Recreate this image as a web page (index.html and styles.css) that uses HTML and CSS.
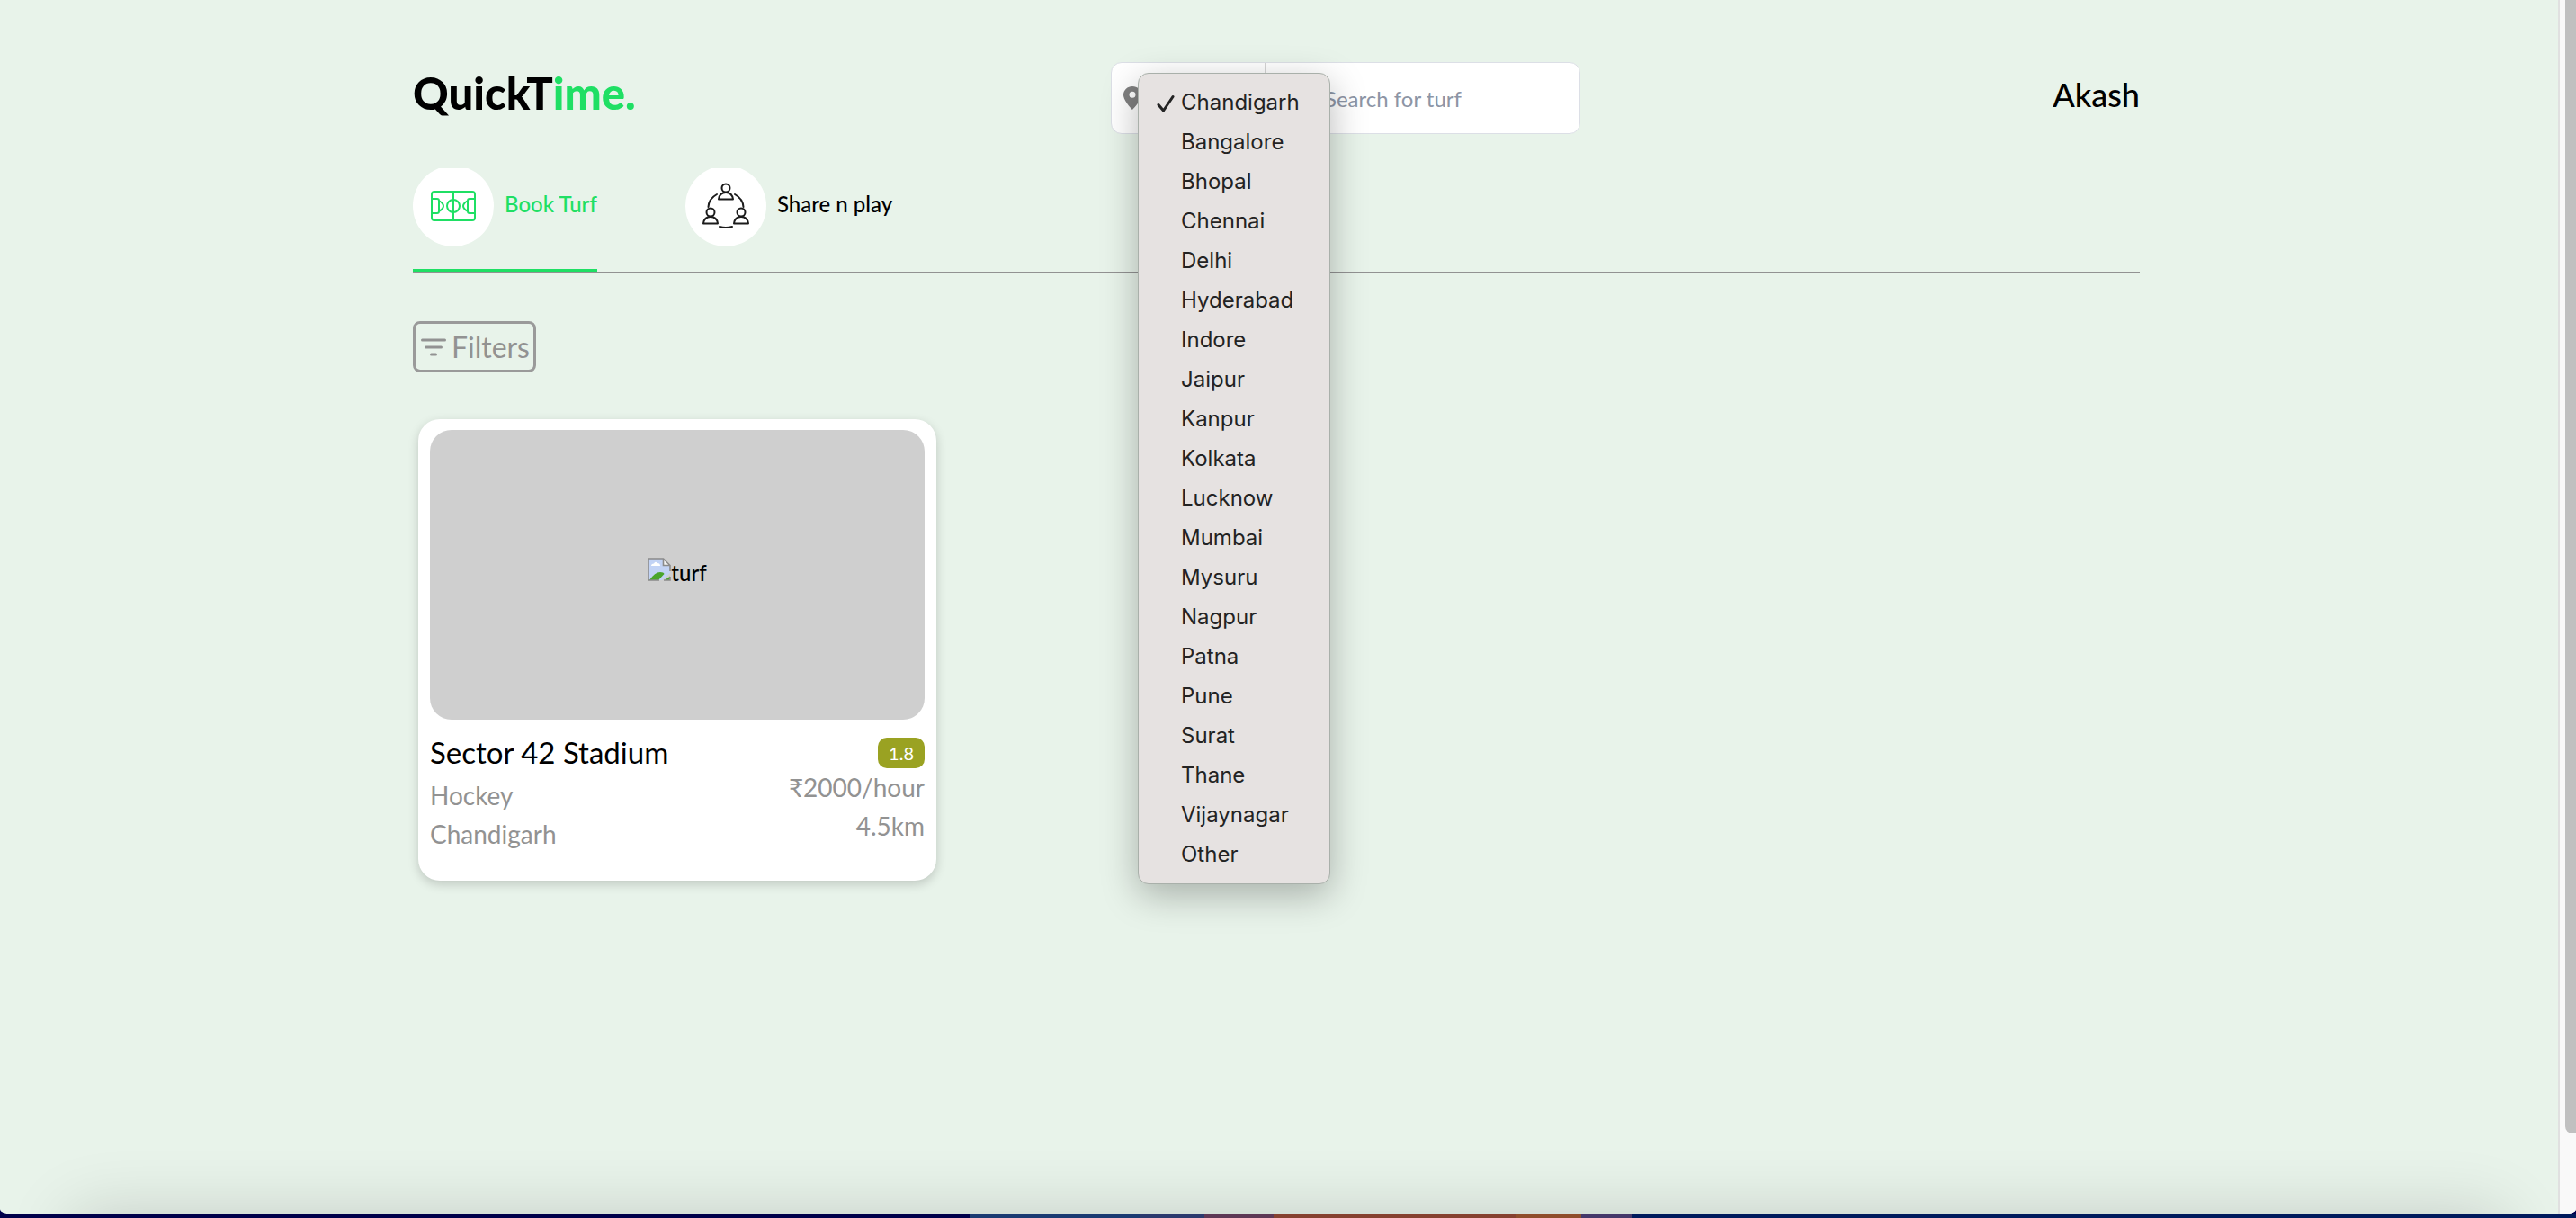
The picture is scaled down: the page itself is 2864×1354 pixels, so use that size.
FILE: index.html
```html
<!DOCTYPE html>
<html lang="en">
<head>
<meta charset="utf-8">
<meta name="viewport" content="width=device-width, initial-scale=1">
<title>QuickTime.</title>
<link rel="stylesheet" href="styles.css">
</head>
<body>
<div class="window">
  <div class="page">
    <header class="header">
      <a class="logo" href="#">QuickT<span class="logo-accent">ime.</span></a>
      <form class="search">
        <div class="city">
          <svg class="pin" viewBox="0 0 20 26" aria-hidden="true"><path fill-rule="evenodd" d="M10 0C4.500 0 0 4.200 0 9.500 0 16 10 26 10 26s10-10 10-16.500C20 4.200 15.500 0 10 0zm0 5.700a3.500 3.500 0 1 1 0 7 3.500 3.500 0 0 1 0-7z"/></svg>
          <select class="city-select" aria-label="City"><option>Chandigarh</option></select>
        </div>
        <input class="search-input" type="text" placeholder="Search for turf" aria-label="Search for turf">
        <ul class="menu" role="listbox" aria-label="City">
          <li class="option" role="option" aria-selected="true"><svg class="check" viewBox="0 0 20 20" aria-hidden="true"><path d="M2 11.500 7.500 18 18 2.500"/></svg>Chandigarh</li>
          <li class="option" role="option">Bangalore</li>
          <li class="option" role="option">Bhopal</li>
          <li class="option" role="option">Chennai</li>
          <li class="option" role="option">Delhi</li>
          <li class="option" role="option">Hyderabad</li>
          <li class="option" role="option">Indore</li>
          <li class="option" role="option">Jaipur</li>
          <li class="option" role="option">Kanpur</li>
          <li class="option" role="option">Kolkata</li>
          <li class="option" role="option">Lucknow</li>
          <li class="option" role="option">Mumbai</li>
          <li class="option" role="option">Mysuru</li>
          <li class="option" role="option">Nagpur</li>
          <li class="option" role="option">Patna</li>
          <li class="option" role="option">Pune</li>
          <li class="option" role="option">Surat</li>
          <li class="option" role="option">Thane</li>
          <li class="option" role="option">Vijaynagar</li>
          <li class="option" role="option">Other</li>
        </ul>
      </form>
      <a class="user" href="#">Akash</a>
    </header>

    <nav class="tabs">
      <a class="tab tab-active" href="#">
        <svg class="tab-icon" viewBox="0 3 90 87" aria-hidden="true">
          <circle cx="45" cy="45" r="45" fill="#fff"/>
          <g fill="none" stroke="#1fdf64" stroke-width="2">
            <rect x="21" y="29" width="48" height="32" rx="3"/>
            <path d="M45 29v32M21 37h6q2 0 2 2v12q0 2-2 2h-6M69 37h-6q-2 0-2 2v12q0 2 2 2h6M29 39q10 6 0 12M61 39q-10 6 0 12"/>
            <circle cx="45" cy="45" r="7"/>
          </g>
        </svg>
        <span class="tab-label">Book Turf</span>
      </a>
      <a class="tab" href="#">
        <svg class="tab-icon" viewBox="0 3 90 87" aria-hidden="true">
          <circle cx="45" cy="45" r="45" fill="#fff"/>
          <g fill="none" stroke="#1b1b1b" stroke-width="2" stroke-linejoin="round">
            <g><circle cx="45" cy="25" r="4.500"/><path d="M37 37.500q1-7.500 8-7.500t8 7.500z"/></g>
            <g><circle cx="28" cy="52" r="4.500"/><path d="M20 64.500q1-7.500 8-7.500t8 7.500z"/></g>
            <g><circle cx="62" cy="52" r="4.500"/><path d="M54 64.500q1-7.500 8-7.500t8 7.500z"/></g>
            <path stroke-linecap="round" d="M35 32q-9 5-9.500 14M55 32q9 5 9.500 14M38 68q7 2 14 0"/>
          </g>
        </svg>
        <span class="tab-label">Share n play</span>
      </a>
    </nav>

    <main>
      <button class="filters" type="button">
        <svg class="filters-icon" viewBox="0 0 28 22" aria-hidden="true"><path d="M1.500 3h25M5.500 11h17M11.500 19h5"/></svg>
        <span>Filters</span>
      </button>

      <article class="card">
        <div class="photo">
          <svg class="broken" viewBox="0 0 26 26" aria-hidden="true">
            <path d="M1 1h16.500l7.500 7.500v8.500L16 25H1z" fill="#c2d3f5"/>
            <path d="M4 9q0-2.500 3-2.500 1.500-3 4-.500 3 0 3 3z" fill="#fff"/>
            <path d="M2 25q6-9 12-9 4 0 4.500 2L12 25zM19 25l6-4.500V25z" fill="#4aa52c"/>
            <path d="M17.500 1v7.500H25z" fill="#f4f4f4"/>
            <path d="M13 25H1V1h16.500L25 8.500V15M17.500 1v7.500H25M18 25h7v-4" fill="none" stroke="#8b8b8b" stroke-width="1.600"/>
          </svg>
          <span>turf</span>
        </div>
        <div class="details">
          <div class="details-main">
            <h2 class="name">Sector 42 Stadium</h2>
            <p class="meta">Hockey</p>
            <p class="meta">Chandigarh</p>
          </div>
          <div class="details-side">
            <span class="rating">1.8</span>
            <p class="meta">₹2000/hour</p>
            <p class="meta">4.5km</p>
          </div>
        </div>
      </article>
    </main>
  </div>
  <div class="scrollbar"><div class="thumb"></div></div>
</div>
<div class="desktop"></div>
</body>
</html>
```
FILE: styles.css
```css
* { box-sizing: border-box; }

body {
  margin: 0;
  min-height: 100vh;
  display: flex;
  flex-direction: column;
  background: #00004e;
  color: #000;
  font-family: Lato, "Noto Sans", sans-serif;
  font-size: 24px;
}

a { color: inherit; text-decoration: none; }
h2, p, ul { margin: 0; padding: 0; }

.window {
  position: relative;
  flex: 1;
  display: flex;
  overflow: hidden;
  background: #e8f3ea;
  border-radius: 0 0 15px 15px / 0 0 6px 6px;
}

/* soft shade cast by the dock onto the window's lower edge */
.window::after {
  content: "";
  position: absolute;
  left: 80px;
  right: 80px;
  bottom: -160px;
  height: 160px;
  box-shadow: 0 0 76px rgba(0, 0, 0, 0.16);
  pointer-events: none;
}

.page {
  flex: 1;
  max-width: 1932px;
  margin: 0 auto;
  padding: 69px 9px 48px 3px;
}

.header {
  display: grid;
  grid-template-columns: 1fr 522px 1fr;
  align-items: start;
}

.logo {
  font-size: 49px;
  line-height: 68px;
  font-weight: 900;
}
.logo-accent { color: #1fdf64; }

.user {
  justify-self: end;
  font-size: 36px;
  line-height: 72px;
  font-weight: 500;
}

.search {
  position: relative;
  left: 77px;
  display: flex;
  height: 80px;
  background: #fff;
  border: 1px solid #dcdfe6;
  border-radius: 12px;
}

.city {
  width: 171px;
  display: flex;
  align-items: center;
  gap: 8px;
  padding-left: 13px;
  border-right: 1px solid #d5d5d5;
}
.pin { width: 20px; height: 26px; fill: #808080; }
.city-select {
  width: 120px;
  border: 0;
  background: transparent;
  font: inherit;
  font-size: 20px;
}
.search-input {
  flex: 1;
  min-width: 0;
  padding: 0 20px 0 66px;
  border: 0;
  background: transparent;
  font: inherit;
  outline: none;
}
.search-input::placeholder { color: #8d95a5; opacity: 1; }

.menu {
  position: absolute;
  left: 29px;
  top: 11px;
  z-index: 2;
  width: 214px;
  padding: 10px 0;
  list-style: none;
  color: #232323;
  background: #e6e2e1;
  border: 1px solid #a9b0aa;
  border-radius: 12px;
  box-shadow: 0 12px 40px rgba(0, 0, 0, 0.28);
  font-family: Inter, "Liberation Sans", sans-serif;
  font-size: 24px;
}
.option {
  position: relative;
  padding-left: 47px;
  line-height: 44px;
}
.check {
  position: absolute;
  left: 20px;
  top: 13px;
  width: 20px;
  height: 20px;
  fill: none;
  stroke: #232323;
  stroke-width: 3;
  stroke-linecap: round;
  stroke-linejoin: round;
}

.tabs {
  display: flex;
  gap: 98px;
  margin-top: 38px;
  border-bottom: 1px solid #929292;
}
.tab {
  display: flex;
  align-items: flex-start;
  gap: 12px;
  height: 115px;
  border-bottom: 3px solid transparent;
  font-weight: 500;
}
.tab-active { color: #1fdf64; border-color: #1fdf64; }
.tab-icon { width: 90px; height: 87px; }
.tab-label { line-height: 80px; }

.filters {
  display: flex;
  align-items: center;
  gap: 6px;
  height: 57px;
  margin-top: 54px;
  padding: 0 4px 0 6px;
  color: #929292;
  background: transparent;
  border: 3px solid #9a9a9a;
  border-radius: 8px;
  font: inherit;
  font-size: 32px;
}
.filters-icon {
  width: 28px;
  height: 22px;
  fill: none;
  stroke: #929292;
  stroke-width: 3;
  stroke-linecap: round;
}

.card {
  width: 576px;
  margin: 52px 0 0 6px;
  padding: 12px 13px 30px;
  background: #fff;
  border-radius: 24px;
  box-shadow: 0 4px 12px rgba(0, 0, 0, 0.18);
}
.photo {
  display: flex;
  align-items: center;
  justify-content: center;
  height: 322px;
  padding-bottom: 4px;
  background: #cfcfcf;
  border-radius: 24px;
  line-height: 28px;
  font-weight: 500;
}
.broken { width: 26px; height: 26px; margin-bottom: 8px; }

.details {
  display: flex;
  justify-content: space-between;
  padding-top: 14px;
}
.details-side {
  display: flex;
  flex-direction: column;
  align-items: flex-end;
  padding-top: 6px;
}
.name {
  margin-bottom: 5px;
  font-size: 33px;
  line-height: 44px;
  font-weight: 400;
}
.meta {
  color: #929292;
  font-size: 28px;
  line-height: 43px;
}
.rating {
  padding: 0 12px;
  color: #fff;
  background: #9aa222;
  border-radius: 10px;
  font-size: 20px;
  line-height: 34px;
}

.scrollbar {
  width: 20px;
  padding-left: 6px;
  background: #f9f9f9;
  border-left: 2px solid #e0e0e0;
}
.thumb {
  height: 1260px;
  max-height: 94vh;
  background: #c0c0c0;
  border-radius: 0 0 0 8px;
}

.desktop {
  height: 4px;
  background: linear-gradient(90deg,
    #00004a 0 1079px, #1a3b72 1079px 1268px, #2c3a6e 1268px 1339px,
    #5e3855 1339px 1416px, #864130 1416px 1686px, #8f4e2c 1686px 1758px,
    #45386a 1758px 1814px, #001a5c 1814px);
}
```
